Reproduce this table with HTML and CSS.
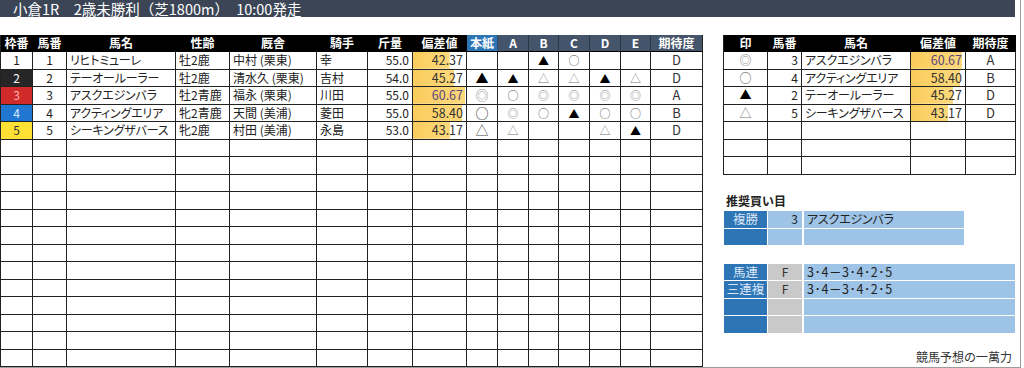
FILE: index.html
```html
<!DOCTYPE html>
<html lang="ja">
<head>
<meta charset="utf-8">
<title>小倉1R</title>
<link rel="stylesheet" href="styles.css">
</head>
<body>
<div class="page">
  <div class="title">小倉1R　2歳未勝利（芝1800m）　10:00発走</div>
  <div class="content">
    <div class="race">
      <div class="h">枠番</div><div class="h">馬番</div><div class="h">馬名</div><div class="h">性齢</div><div class="h">厩舎</div><div class="h">騎手</div><div class="h">斤量</div><div class="h">偏差値</div><div class="h hb">本紙</div><div class="h hs">A</div><div class="h hs">B</div><div class="h hs">C</div><div class="h hs">D</div><div class="h hs">E</div><div class="h hs">期待度</div>

      <div class="ctr w1">1</div><div class="ctr">1</div><div class="name">リヒトミューレ</div><div>牡2鹿</div><div>中村 (栗東)</div><div>幸</div><div class="num">55.0</div><div class="num bar" style="--w:69%">42.37</div><div class="mk"></div><div class="ms"></div><div class="ms k">▲</div><div class="ms o">○</div><div class="ms"></div><div class="ms"></div><div class="ctr rank">D</div>

      <div class="ctr w2">2</div><div class="ctr">2</div><div class="name">テーオールーラー</div><div>牡2鹿</div><div>清水久 (栗東)</div><div>吉村</div><div class="num">54.0</div><div class="num bar" style="--w:78%">45.27</div><div class="mk k">▲</div><div class="ms k">▲</div><div class="ms t">△</div><div class="ms t">△</div><div class="ms k">▲</div><div class="ms t">△</div><div class="ctr rank">D</div>

      <div class="ctr w3">3</div><div class="ctr">3</div><div class="name">アスクエジンバラ</div><div>牡2青鹿</div><div>福永 (栗東)</div><div>川田</div><div class="num">55.0</div><div class="num bar top" style="--w:98%">60.67</div><div class="mk d">◎</div><div class="ms o">○</div><div class="ms d">◎</div><div class="ms d">◎</div><div class="ms d">◎</div><div class="ms d">◎</div><div class="ctr rank">A</div>

      <div class="ctr w4">4</div><div class="ctr">4</div><div class="name">アクティングエリア</div><div>牝2青鹿</div><div>天間 (美浦)</div><div>菱田</div><div class="num">55.0</div><div class="num bar" style="--w:93%">58.40</div><div class="mk o">○</div><div class="ms d">◎</div><div class="ms o">○</div><div class="ms k">▲</div><div class="ms o">○</div><div class="ms o">○</div><div class="ctr rank">B</div>

      <div class="ctr w5">5</div><div class="ctr">5</div><div class="name">シーキングザバース</div><div>牝2鹿</div><div>村田 (美浦)</div><div>永島</div><div class="num">53.0</div><div class="num bar" style="--w:70%">43.17</div><div class="mk t">△</div><div class="ms t">△</div><div class="ms"></div><div class="ms"></div><div class="ms t">△</div><div class="ms k">▲</div><div class="ctr rank">D</div>

      <div></div><div></div><div></div><div></div><div></div><div></div><div></div><div></div><div></div><div></div><div></div><div></div><div></div><div></div><div></div>
      <div></div><div></div><div></div><div></div><div></div><div></div><div></div><div></div><div></div><div></div><div></div><div></div><div></div><div></div><div></div>
      <div></div><div></div><div></div><div></div><div></div><div></div><div></div><div></div><div></div><div></div><div></div><div></div><div></div><div></div><div></div>
      <div></div><div></div><div></div><div></div><div></div><div></div><div></div><div></div><div></div><div></div><div></div><div></div><div></div><div></div><div></div>
      <div></div><div></div><div></div><div></div><div></div><div></div><div></div><div></div><div></div><div></div><div></div><div></div><div></div><div></div><div></div>
      <div></div><div></div><div></div><div></div><div></div><div></div><div></div><div></div><div></div><div></div><div></div><div></div><div></div><div></div><div></div>
      <div></div><div></div><div></div><div></div><div></div><div></div><div></div><div></div><div></div><div></div><div></div><div></div><div></div><div></div><div></div>
      <div></div><div></div><div></div><div></div><div></div><div></div><div></div><div></div><div></div><div></div><div></div><div></div><div></div><div></div><div></div>
      <div></div><div></div><div></div><div></div><div></div><div></div><div></div><div></div><div></div><div></div><div></div><div></div><div></div><div></div><div></div>
      <div></div><div></div><div></div><div></div><div></div><div></div><div></div><div></div><div></div><div></div><div></div><div></div><div></div><div></div><div></div>
      <div></div><div></div><div></div><div></div><div></div><div></div><div></div><div></div><div></div><div></div><div></div><div></div><div></div><div></div><div></div>
      <div></div><div></div><div></div><div></div><div></div><div></div><div></div><div></div><div></div><div></div><div></div><div></div><div></div><div></div><div></div>
      <div></div><div></div><div></div><div></div><div></div><div></div><div></div><div></div><div></div><div></div><div></div><div></div><div></div><div></div><div></div>
    </div>

    <div class="side">
      <div class="pick">
        <div class="h">印</div><div class="h">馬番</div><div class="h">馬名</div><div class="h">偏差値</div><div class="h">期待度</div>
        <div class="ctr pm d">◎</div><div class="num">3</div><div class="name">アスクエジンバラ</div><div class="num bar top" style="--w:95%">60.67</div><div class="ctr rank">A</div>
        <div class="ctr pm o">○</div><div class="num">4</div><div class="name">アクティングエリア</div><div class="num bar" style="--w:91%">58.40</div><div class="ctr rank">B</div>
        <div class="ctr pm k">▲</div><div class="num">2</div><div class="name">テーオールーラー</div><div class="num bar" style="--w:78%">45.27</div><div class="ctr rank">D</div>
        <div class="ctr pm t">△</div><div class="num">5</div><div class="name">シーキングザバース</div><div class="num bar" style="--w:69%">43.17</div><div class="ctr rank">D</div>
        <div></div><div></div><div></div><div></div><div></div>
        <div></div><div></div><div></div><div></div><div></div>
        <div></div><div></div><div></div><div></div><div></div>
      </div>

      <div class="rec">推奨買い目</div>
      <div class="buy one">
        <div class="lab">複勝</div><div class="cnt num">3</div><div class="txt name">アスクエジンバラ</div>
        <div class="lab"></div><div class="cnt"></div><div class="txt"></div>
      </div>
      <div class="buy two">
        <div class="lab">馬連</div><div class="fx">F</div><div class="txt combo">3･4－3･4･2･5</div>
        <div class="lab">三連複</div><div class="fx">F</div><div class="txt combo">3･4－3･4･2･5</div>
        <div class="lab"></div><div class="fx"></div><div class="txt"></div>
        <div class="lab"></div><div class="fx"></div><div class="txt"></div>
      </div>
      <div class="foot">競馬予想の一萬力</div>
    </div>
  </div>
</div>
</body>
</html>
```

FILE: styles.css
```css
* {
  box-sizing: border-box;
  margin: 0;
  padding: 0;
}

body {
  margin: 0;
  background: #fff;
  font-family: "Noto Sans CJK JP", "Noto Sans", sans-serif;
  font-size: 12px;
  color: #222;
}

.page {
  width: 1021px;
  height: 368px;
  border-right: 1px solid #9c9c9c;
  border-bottom: 1px solid #9c9c9c;
  display: flex;
  flex-direction: column;
}

.title {
  width: 1015px;
  height: 17px;
  flex: none;
  background: #3b4556;
  color: #fff;
  font-size: 14.5px;
  line-height: 17px;
  padding-left: 13px;
  white-space: nowrap;
}

.content {
  flex: 1;
  display: flex;
  gap: 20px;
  margin-top: 18px;
}

/* ---------- main race table ---------- */
.race,
.pick {
  display: grid;
  grid-template-rows: 17px;
  grid-auto-rows: 17.5px;
  border-left: 1px solid #222;
  align-self: flex-start;
}

.race {
  width: 703px;
  grid-template-columns: 32px 34px 109px 54px 87px 51px 45px 54px 31px 31px 30px 31px 31px 30px 52px;
}

.pick {
  width: 293px;
  grid-template-columns: 44px 34px 109px 55px 50px;
}

.race > div,
.pick > div {
  border-right: 1px solid #222;
  border-bottom: 1px solid #222;
  line-height: 16px;
  padding: 0 3px;
  white-space: nowrap;
}

.race > .h,
.pick > .h {
  background: #000;
  color: #fff;
  font-weight: bold;
  text-align: center;
  border-right-color: #000;
  border-bottom-color: #000;
  padding: 0;
}

.race > .hb {
  background: #2e75b6;
  border-right-color: #2a4d74;
}

.race > .hs {
  background: #44546a;
  border-right-color: #2c3645;
}

.race > .h:nth-child(15) {
  border-right-color: #222;
}

.ctr {
  text-align: center;
}

.num {
  text-align: right;
}

.name {
  font-feature-settings: "palt";
  letter-spacing: -0.2px;
}

.rank {
  font-size: 13px;
  color: #333;
}

.bar {
  background: linear-gradient(90deg, #fbcc5c, #fcd97c) no-repeat left center;
  background-size: var(--w) 100%;
  font-size: 12.5px;
  color: #333;
}

.bar.top {
  color: #5a4680;
}

.race > .w2 { background: #262626; color: #fff; }
.race > .w3 { background: #d12a2a; color: #ffb3b3; }
.race > .w4 { background: #1f77d2; color: #dcebff; }
.race > .w5 { background: #ffe034; color: #333; }

/* marks */
.race > .mk,
.race > .ms,
.pick > .pm {
  text-align: center;
  padding: 0;
}

.mk { font-size: 13px; }
.ms { font-size: 11px; }
.pm { font-size: 12px; }

.k { color: #000; }
.o { color: #555; }
.t { color: #777; }
.d { color: #8a8a8a; }

.mk.o { color: #222; }
.mk.t { color: #444; }

/* ---------- side column ---------- */
.side {
  width: 293px;
  display: flex;
  flex-direction: column;
}

.rec {
  margin-top: 17px;
  margin-left: 3px;
  font-weight: bold;
  line-height: 17px;
}

.buy {
  display: grid;
  margin-left: 1px;
  column-gap: 1px;
  row-gap: 1px;
}

.buy.one {
  margin-top: 2px;
  width: 240px;
  grid-template-columns: 43px 34px 161px;
  grid-template-rows: 17px 16px;
}

.buy.two {
  margin-top: 19px;
  width: 291px;
  grid-template-columns: 43px 34px 212px;
  grid-auto-rows: 16.5px;
  row-gap: 1px;
}

.buy > div {
  line-height: 16px;
  white-space: nowrap;
}

.lab {
  background: #2e75b6;
  color: #dae7f6;
  text-align: center;
  font-size: 12.5px;
}

.cnt {
  background: #9dc3e6;
  padding-right: 4px;
}

.txt {
  background: #9dc3e6;
  padding-left: 3px;
  margin-left: 1px;
}

.combo {
  font-size: 12.5px;
  letter-spacing: 0.6px;
}

.fx {
  background: #c9c9c9;
  text-align: center;
  color: #333;
}

.foot {
  margin-top: auto;
  text-align: right;
  padding-right: 4px;
  padding-bottom: 2px;
  line-height: 17px;
  color: #333;
}
```
